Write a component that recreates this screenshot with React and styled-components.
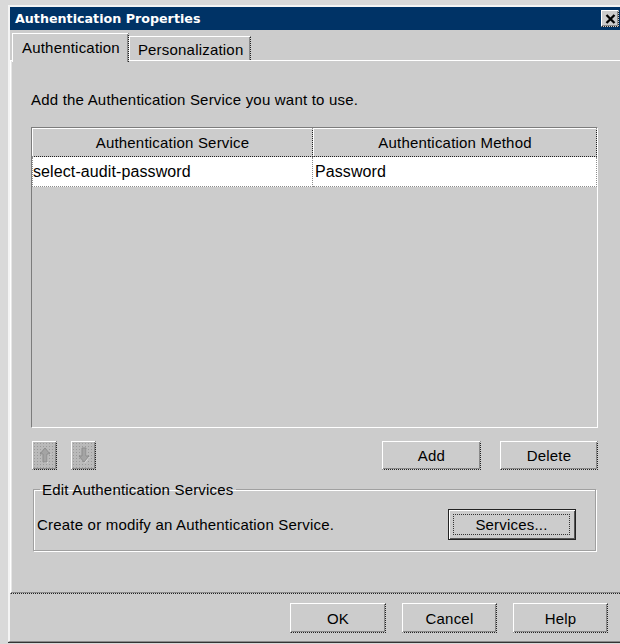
import React from "react";
import styled, { createGlobalStyle } from "styled-components";

const GlobalStyle = createGlobalStyle`
  html, body {
    margin: 0;
    padding: 0;
    background: #d9d9d9;
    overflow: hidden;
  }
  body {
    font-family: "Liberation Sans", Arial, sans-serif;
    color: #000;
  }
  * { box-sizing: border-box; }
`;

const Page = styled.div`
  width: 620px;
  height: 644px;
  overflow: hidden;
  padding: 5px 0 0 8px;
`;

const Window = styled.div`
  width: 622px;
  background: #cccccc;
  border-top: 2px solid #f4f4f4;
  border-left: 2px solid #f4f4f4;
  border-bottom: 1px solid #8a8a8a;
  box-shadow: 0 1px 0 #333;
  display: flex;
  flex-direction: column;
`;

const TitleBar = styled.div`
  height: 23px;
  background: #003366;
  display: flex;
  align-items: center;
  justify-content: space-between;
  padding: 0 11px 0 5px;
`;

const Title = styled.span`
  font-family: "DejaVu Sans", Verdana, sans-serif;
  font-weight: bold;
  font-size: 12.7px;
  color: #ffffff;
`;

const CloseButton = styled.div`
  width: 18px;
  height: 17px;
  background: #cccccc;
  border-style: solid dotted dotted solid;
  border-width: 1px;
  border-color: #ffffff #222 #222 #ffffff;
  box-shadow: inset -1px -1px 0 #8a8a8a;
  display: flex;
  align-items: center;
  justify-content: center;
`;

const TabStrip = styled.div`
  margin-top: 3px;
  height: 27px;
  display: flex;
  align-items: flex-end;
  padding-left: 2px;
  position: relative;
  z-index: 1;
`;

const Tab = styled.div`
  height: ${(p) => (p.$active ? 29 : 24)}px;
  margin-bottom: ${(p) => (p.$active ? -2 : 0)}px;
  padding: ${(p) => (p.$active ? "5px 8px 0 9px" : "4px 7px 0 8px")};
  background: #cccccc;
  border-top: 1px solid #ffffff;
  border-left: 1px solid #ffffff;
  border-right: 1px dotted #222;
  box-shadow: inset -1px 0 0 #8a8a8a;
  font-size: 15px;
  line-height: 17px;
  letter-spacing: 0.2px;
  white-space: nowrap;
`;

const TabPanel = styled.div`
  height: 534px;
  border-top: 1px solid #ffffff;
  border-left: 1px solid #ffffff;
  border-bottom: 1px dotted #222;
  border-right: 1px dotted #222;
  box-shadow: inset 0 -1px 0 #8a8a8a, inset 1px 0 0 #e6e6e6;
  padding: 0 31px 0 20px;
  display: flex;
  flex-direction: column;
`;

const Instruction = styled.div`
  margin-top: 30px;
  font-size: 15px;
  line-height: 17px;
  letter-spacing: 0.2px;
`;

const Table = styled.div`
  margin-top: 19px;
  height: 301px;
  border: 1px solid;
  border-color: #7c7c7c #ffffff #ffffff #7c7c7c;
  background: #cccccc;
  display: grid;
  grid-template-columns: 281px 1fr;
  grid-auto-rows: min-content;
`;

const HeaderCell = styled.div`
  height: 29px;
  border-top: 1px solid #ffffff;
  border-left: 1px solid #ffffff;
  border-right: 1px dotted #222;
  border-bottom: 1px dotted #222;
  display: flex;
  align-items: center;
  justify-content: center;
  font-size: 15px;
  letter-spacing: 0.2px;
`;

const Cell = styled.div`
  height: 30px;
  background: #ffffff;
  border-right: 1px dotted #8c8c8c;
  border-bottom: 1px dotted #8c8c8c;
  border-left: ${(p) => (p.$first ? "1px dotted #8c8c8c" : "none")};
  padding-left: ${(p) => (p.$first ? 0 : 2)}px;
  display: flex;
  align-items: center;
  font-size: 16px;
  letter-spacing: 0.1px;
`;

const ActionRow = styled.div`
  margin-top: 13px;
  height: 29px;
  display: flex;
  align-items: center;
  padding-left: 1px;
`;

const IconButton = styled.div`
  width: 25px;
  height: 29px;
  margin-right: 14px;
  border-style: solid dotted dotted solid;
  border-width: 1px;
  border-color: #ffffff #222 #222 #ffffff;
  box-shadow: inset -1px -1px 0 #8a8a8a;
  background-color: #bababa;
  background-image: radial-gradient(circle, #9a9a9a 0.7px, transparent 0.9px);
  background-size: 3px 3px;
  display: flex;
  align-items: center;
  justify-content: center;
`;

const Button = styled.div`
  width: ${(p) => p.$w}px;
  height: ${(p) => p.$h || 30}px;
  margin-left: ${(p) => (p.$push ? "auto" : "0")};
  background: #cccccc;
  border-style: solid dotted dotted solid;
  border-width: 1px;
  border-color: #ffffff #222 #222 #ffffff;
  box-shadow: inset -1px -1px 0 #8a8a8a;
  display: flex;
  align-items: center;
  justify-content: center;
  font-size: 15px;
  letter-spacing: 0.2px;
  flex-shrink: 0;
`;

const ButtonGap = styled.div`
  width: ${(p) => p.$w}px;
  flex-shrink: 0;
`;

const GroupBox = styled.fieldset`
  margin: 11px 2px 0 2px;
  padding: 0 19px 10px 3px;
  border: 1px solid #a0a0a0;
  box-shadow: inset 1px 1px 0 #ffffff, 1px 1px 0 #ffffff;
  min-width: 0;
`;

const Legend = styled.legend`
  padding: 0 2px;
  margin-left: 3px;
  font-size: 15px;
  line-height: 17px;
  letter-spacing: 0.2px;
`;

const GroupRow = styled.div`
  margin-top: 11px;
  height: 31px;
  display: flex;
  align-items: center;
  justify-content: space-between;
`;

const GroupText = styled.span`
  font-size: 15px;
  letter-spacing: 0.2px;
`;

const DefaultButton = styled.div`
  width: 128px;
  height: 31px;
  background: #cccccc;
  border: 1px solid #222;
  box-shadow: inset 1px 1px 0 #ffffff, inset -1px -1px 0 #555;
  padding: 4px 5px 4px 4px;
  display: flex;
`;

const FocusRing = styled.div`
  flex: 1;
  border: 1px dotted #333;
  display: flex;
  align-items: center;
  justify-content: center;
  font-size: 15px;
  letter-spacing: 0.2px;
`;

const Footer = styled.div`
  display: flex;
  justify-content: flex-end;
  gap: 16px;
  padding: 9px 22px 8px 0;
`;

const CloseGlyph = () => (
  <svg width="11" height="10" viewBox="0 0 11 10">
    <path d="M1.5 1 L9.5 9 M9.5 1 L1.5 9" stroke="#000" strokeWidth="2.3" />
  </svg>
);

const UpArrow = () => (
  <svg width="14" height="17" viewBox="0 0 14 17">
    <path d="M8 2 L13 8 H10 V16 H6 V8 H3 Z" fill="#e4e4e4" opacity="0.7" />
    <path d="M7 1 L12 7 H9 V15 H5 V7 H2 Z" fill="#a4a4a4" stroke="#8c8c8c" />
  </svg>
);

const DownArrow = () => (
  <svg width="14" height="17" viewBox="0 0 14 17">
    <path d="M8 16 L13 10 H10 V2 H6 V10 H3 Z" fill="#e4e4e4" opacity="0.7" />
    <path d="M7 15 L12 9 H9 V1 H5 V9 H2 Z" fill="#a4a4a4" stroke="#8c8c8c" />
  </svg>
);

export default function App() {
  return (
    <>
      <GlobalStyle />
      <Page>
        <Window>
          <TitleBar>
            <Title>Authentication Properties</Title>
            <CloseButton>
              <CloseGlyph />
            </CloseButton>
          </TitleBar>
          <TabStrip>
            <Tab $active>Authentication</Tab>
            <Tab>Personalization</Tab>
          </TabStrip>
          <TabPanel>
            <Instruction>Add the Authentication Service you want to use.</Instruction>
            <Table>
              <HeaderCell>Authentication Service</HeaderCell>
              <HeaderCell>Authentication Method</HeaderCell>
              <Cell $first>select-audit-password</Cell>
              <Cell>Password</Cell>
            </Table>
            <ActionRow>
              <IconButton>
                <UpArrow />
              </IconButton>
              <IconButton>
                <DownArrow />
              </IconButton>
              <Button $w={99} $h={29} $push>
                Add
              </Button>
              <ButtonGap $w={19} />
              <Button $w={98} $h={29}>
                Delete
              </Button>
            </ActionRow>
            <GroupBox>
              <Legend>Edit Authentication Services</Legend>
              <GroupRow>
                <GroupText>Create or modify an Authentication Service.</GroupText>
                <DefaultButton>
                  <FocusRing>Services...</FocusRing>
                </DefaultButton>
              </GroupRow>
            </GroupBox>
          </TabPanel>
          <Footer>
            <Button $w={96}>OK</Button>
            <Button $w={95}>Cancel</Button>
            <Button $w={95}>Help</Button>
          </Footer>
        </Window>
      </Page>
    </>
  );
}
